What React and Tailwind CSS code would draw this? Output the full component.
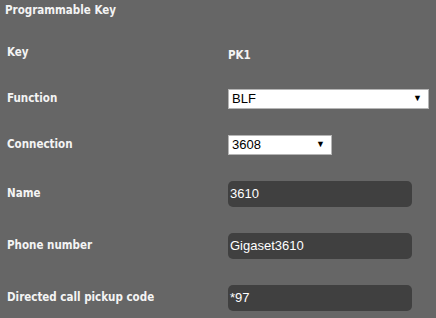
import React from "react";

const labelCls =
  "text-[11.5px] font-bold text-[#f4f4f4] [font-family:'DejaVu_Sans_Condensed','DejaVu_Sans',sans-serif]";

const Row = ({ label, children, h }) => (
  <div className={`flex items-center ${h}`}>
    <div className={`w-[228px] pl-[7px] ${labelCls}`}>{label}</div>
    <div className="flex-1">{children}</div>
  </div>
);

const Select = ({ value, w }) => (
  <div
    className={`${w} h-[20px] bg-white border border-[#b5b5b5] flex items-center justify-between pl-[3px] pr-[6px] text-[13px] text-black [font-family:'Liberation_Sans',Arial,sans-serif]`}
  >
    <span>{value}</span>
    <span className="text-[9px]">▼</span>
  </div>
);

const TextInput = ({ value }) => (
  <div className="w-[184px] h-[26px] rounded-[5px] bg-[#404040] flex items-center pl-[2px] text-[13px] text-white [font-family:'Liberation_Sans',Arial,sans-serif]">
    {value}
  </div>
);

const App = () => {
  return (
    <div className="w-[436px] h-[318px] bg-[#666666] overflow-hidden">
      <div className={`h-[22px] flex items-center pl-[5px] ${labelCls}`}>
        Programmable Key
      </div>
      <div className="mt-[20px]">
        <Row label="Key" h="h-[22px]">
          <span className={labelCls}>PK1</span>
        </Row>
      </div>
      <div className="mt-[25px]">
        <Row label="Function" h="h-[20px]">
          <Select value="BLF" w="w-[201px]" />
        </Row>
      </div>
      <div className="mt-[26px]">
        <Row label="Connection" h="h-[20px]">
          <Select value="3608" w="w-[104px]" />
        </Row>
      </div>
      <div className="mt-[26px]">
        <Row label="Name" h="h-[26px]">
          <TextInput value="3610" />
        </Row>
      </div>
      <div className="mt-[26px]">
        <Row label="Phone number" h="h-[26px]">
          <TextInput value="Gigaset3610" />
        </Row>
      </div>
      <div className="mt-[26px]">
        <Row label="Directed call pickup code" h="h-[26px]">
          <TextInput value="*97" />
        </Row>
      </div>
    </div>
  );
};

export default App;
